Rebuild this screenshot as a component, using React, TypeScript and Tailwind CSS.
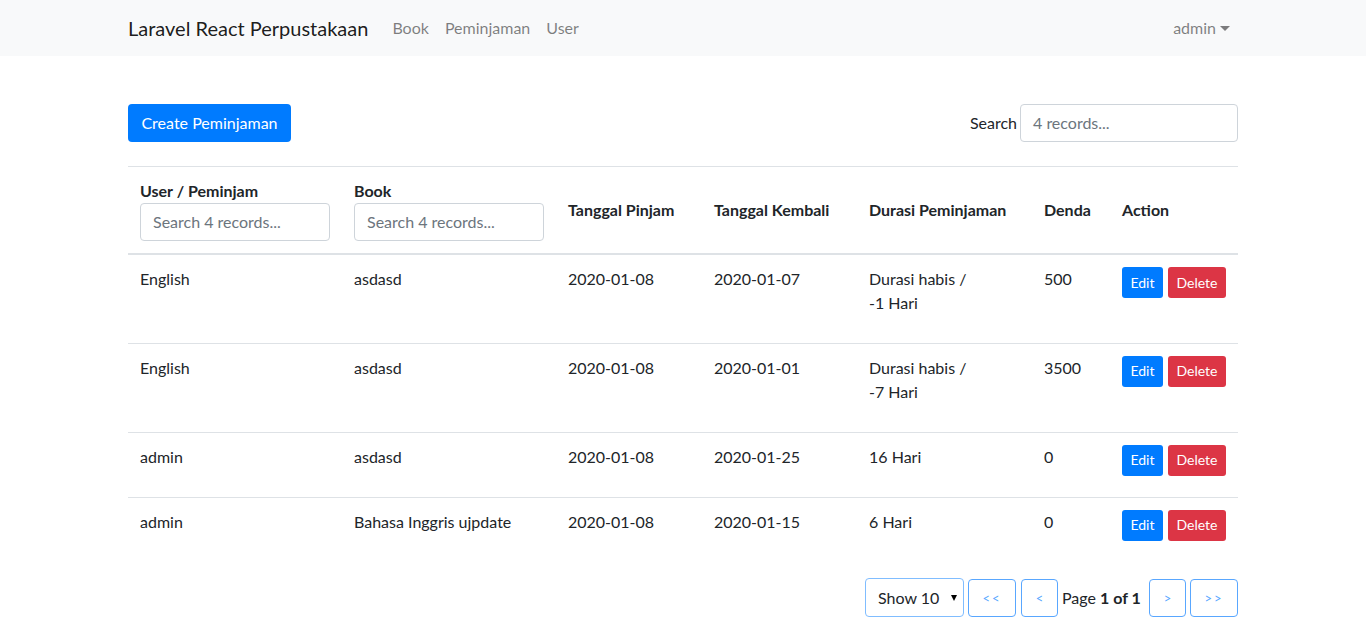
import React from "react";

const font = { fontFamily: 'Lato, "Open Sans", sans-serif' };

type Row = {
  user: string;
  book: string;
  pinjam: string;
  kembali: string;
  durasi: string[];
  denda: string;
  h: string;
};

const rows: Row[] = [
  { user: "English", book: "asdasd", pinjam: "2020-01-08", kembali: "2020-01-07", durasi: ["Durasi habis /", "-1 Hari"], denda: "500", h: "h-[89px]" },
  { user: "English", book: "asdasd", pinjam: "2020-01-08", kembali: "2020-01-01", durasi: ["Durasi habis /", "-7 Hari"], denda: "3500", h: "h-[89px]" },
  { user: "admin", book: "asdasd", pinjam: "2020-01-08", kembali: "2020-01-25", durasi: ["16 Hari"], denda: "0", h: "h-[65px]" },
  { user: "admin", book: "Bahasa Inggris ujpdate", pinjam: "2020-01-08", kembali: "2020-01-15", durasi: ["6 Hari"], denda: "0", h: "h-[65px]" },
];

export default function App() {
  return (
    <div className="min-h-[633px] bg-white text-[#212529] text-[16px] leading-6" style={font}>
      <nav className="h-14 bg-[#f8f9fa]">
        <div className="mx-auto flex h-14 w-[1140px] items-center px-[15px]">
          <span className="mr-4 text-[20px] leading-[30px] text-[rgba(0,0,0,0.9)]">Laravel React Perpustakaan</span>
          <a className="px-2 text-[rgba(0,0,0,0.5)]">Book</a>
          <a className="px-2 text-[rgba(0,0,0,0.5)]">Peminjaman</a>
          <a className="px-2 text-[rgba(0,0,0,0.5)]">User</a>
          <div className="ml-auto flex items-center px-2 text-[rgba(0,0,0,0.5)]">
            admin
            <span className="ml-[4px] inline-block h-0 w-0 border-x-[5px] border-t-[5px] border-x-transparent border-t-[rgba(0,0,0,0.5)]" />
          </div>
        </div>
      </nav>

      <div className="mx-auto w-[1140px] px-[15px] pt-12">
        <div className="flex items-center justify-between">
          <button className="h-[38px] w-[163px] rounded bg-[#007bff] text-white">Create Peminjaman</button>
          <div className="flex items-center">
            <span className="mr-[3px]">Search</span>
            <div className="flex h-[38px] w-[218px] items-center rounded border border-[#ced4da] px-3 text-[#6c757d]">4 records...</div>
          </div>
        </div>

        <table className="mt-6 w-full border-collapse">
          <thead>
            <tr className="border-t border-[#dee2e6] border-b-2">
              <th className="w-[214px] p-3 text-left align-top font-bold whitespace-nowrap">
                <div>User / Peminjam</div>
                <div className="flex h-[38px] w-full items-center rounded border border-[#ced4da] px-3 font-normal text-[#6c757d]">Search 4 records...</div>
              </th>
              <th className="w-[214px] p-3 text-left align-top font-bold whitespace-nowrap">
                <div>Book</div>
                <div className="flex h-[38px] w-full items-center rounded border border-[#ced4da] px-3 font-normal text-[#6c757d]">Search 4 records...</div>
              </th>
              <th className="w-[146px] p-3 text-left align-middle font-bold whitespace-nowrap">Tanggal Pinjam</th>
              <th className="w-[155px] p-3 text-left align-middle font-bold whitespace-nowrap">Tanggal Kembali</th>
              <th className="w-[175px] p-3 text-left align-middle font-bold whitespace-nowrap">Durasi Peminjaman</th>
              <th className="w-[78px] p-3 text-left align-middle font-bold whitespace-nowrap">Denda</th>
              <th className="p-3 text-left align-middle font-bold whitespace-nowrap">Action</th>
            </tr>
          </thead>
          <tbody>
            {rows.map((r, i) => (
              <tr key={i} className={`border-[#dee2e6] ${i > 0 ? "border-t" : ""} ${r.h}`}>
                <td className="p-3 align-top">{r.user}</td>
                <td className="p-3 align-top">{r.book}</td>
                <td className="p-3 align-top">{r.pinjam}</td>
                <td className="p-3 align-top">{r.kembali}</td>
                <td className="p-3 align-top">
                  {r.durasi.map((d, j) => (
                    <div key={j}>{d}</div>
                  ))}
                </td>
                <td className="p-3 align-top">{r.denda}</td>
                <td className="p-3 align-top">
                  <div className="flex gap-[5px]">
                    <button className="h-[31px] w-[41px] rounded-[3px] bg-[#007bff] text-[14px] text-white">Edit</button>
                    <button className="h-[31px] w-[58px] rounded-[3px] bg-[#dc3545] text-[14px] text-white">Delete</button>
                  </div>
                </td>
              </tr>
            ))}
          </tbody>
        </table>

        <div className="mt-4 flex items-center justify-end gap-1">
          <div className="flex h-[39px] w-[99px] items-center justify-between rounded border border-[#80bdff] pl-3 pr-[6px]">
            <span>Show 10</span>
            <span className="inline-block h-0 w-0 border-x-[3.5px] border-t-[6px] border-x-transparent border-t-black" />
          </div>
          <button className="h-[38px] w-[48px] rounded border border-[#59a7ff] text-[13px] tracking-[2px] text-[#59a7ff]">&lt;&lt;</button>
          <button className="ml-px h-[38px] w-[37px] rounded border border-[#59a7ff] text-[13px] text-[#59a7ff]">&lt;</button>
          <span className="w-[83px] whitespace-nowrap">
            Page <b>1 of 1</b>
          </span>
          <button className="h-[38px] w-[37px] rounded border border-[#59a7ff] text-[13px] text-[#59a7ff]">&gt;</button>
          <button className="h-[38px] w-[48px] rounded border border-[#59a7ff] text-[13px] tracking-[2px] text-[#59a7ff]">&gt;&gt;</button>
        </div>
      </div>
    </div>
  );
}
